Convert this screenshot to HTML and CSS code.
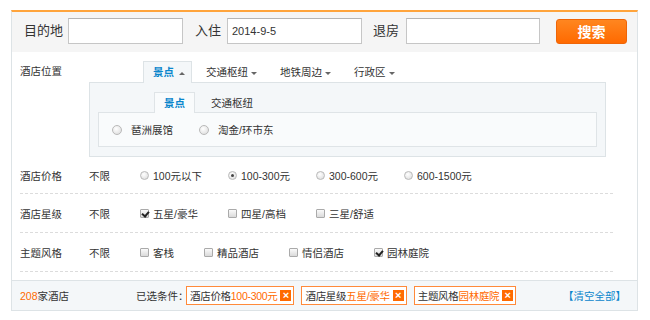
FILE: index.html
```html
<!DOCTYPE html>
<html lang="zh-CN">
<head>
  <meta charset="UTF-8">
  <meta name="viewport" content="width=device-width, initial-scale=1.0">
  <title>酒店搜索</title>
  <link rel="stylesheet" href="styles.css">
</head>
<body>
  <div class="hotel-search">
    <form class="search-bar">
      <label class="sb-label sb-label-dest" for="dest">目的地</label>
      <input id="dest" class="sb-input sb-input-dest" type="text">
      <label class="sb-label sb-label-in" for="checkin">入住</label>
      <input id="checkin" class="sb-input sb-input-in" type="text" value="2014-9-5">
      <label class="sb-label sb-label-out" for="checkout">退房</label>
      <input id="checkout" class="sb-input sb-input-out" type="text">
      <button type="button" class="sb-btn">搜索</button>
    </form>

    <div class="filters">
      <div class="loc-row">
        <span class="row-label">酒店位置</span>
        <div class="loc-body">
          <ul class="loc-tabs">
            <li class="active">景点<i class="arrow up"></i></li>
            <li>交通枢纽<i class="arrow"></i></li>
            <li>地铁周边<i class="arrow"></i></li>
            <li>行政区<i class="arrow"></i></li>
          </ul>
          <div class="loc-panel">
            <ul class="sub-tabs">
              <li class="active">景点</li>
              <li>交通枢纽</li>
            </ul>
            <div class="sub-box">
              <label class="loc-opt"><span class="radio"></span>琶洲展馆</label>
              <label class="loc-opt"><span class="radio"></span>淘金/环市东</label>
            </div>
          </div>
        </div>
      </div>

      <div class="opt-row first">
        <span class="row-label">酒店价格</span>
        <span class="any">不限</span>
        <label class="opt fixed"><span class="radio"></span>100元以下</label>
        <label class="opt fixed"><span class="radio checked"></span>100-300元</label>
        <label class="opt fixed"><span class="radio"></span>300-600元</label>
        <label class="opt fixed"><span class="radio"></span>600-1500元</label>
      </div>

      <div class="opt-row">
        <span class="row-label">酒店星级</span>
        <span class="any">不限</span>
        <label class="opt fixed"><span class="check checked"></span>五星/豪华</label>
        <label class="opt fixed"><span class="check"></span>四星/高档</label>
        <label class="opt fixed"><span class="check"></span>三星/舒适</label>
      </div>

      <div class="opt-row">
        <span class="row-label">主题风格</span>
        <span class="any">不限</span>
        <label class="opt"><span class="check"></span>客栈</label>
        <label class="opt"><span class="check"></span>精品酒店</label>
        <label class="opt"><span class="check"></span>情侣酒店</label>
        <label class="opt"><span class="check checked"></span>园林庭院</label>
      </div>
    </div>

    <div class="result-bar">
      <span class="count"><em>208</em>家酒店</span>
      <span class="chosen-label">已选条件：</span>
      <span class="tag">酒店价格<em>100-300元</em><i class="tag-close">×</i></span>
      <span class="tag">酒店星级<em>五星/豪华</em><i class="tag-close">×</i></span>
      <span class="tag">主题风格<em>园林庭院</em><i class="tag-close">×</i></span>
      <a class="clear-all" href="#">【清空全部】</a>
    </div>
  </div>
</body>
</html>
```

FILE: styles.css
```css
:root {
  --orange: #ff6a00;
  --blue: #0a86cc;
  --text: #333;
  --line: #dde3e6;
  --panel-bg: #f4f7f9;
}

* {
  margin: 0;
  padding: 0;
  box-sizing: border-box;
}

body {
  font-family: "Liberation Sans", "Noto Sans CJK SC", sans-serif;
  font-size: 10.5px;
  color: var(--text);
  background: #fff;
  padding: 10px 0 0 11px;
}

ul {
  list-style: none;
}

.hotel-search {
  width: 627px;
  border: 1px solid var(--line);
  border-top: 2px solid #ffa43c;
}

/* top search bar */
.search-bar {
  display: flex;
  align-items: center;
  height: 40px;
  padding: 0 0 2px 12px;
  background: #f5f5f5;
}

.sb-label {
  font-size: 13px;
  line-height: 26px;
}

.sb-label-dest { width: 44px; }
.sb-label-in { width: 32px; margin-left: 12px; }
.sb-label-out { width: 33px; margin-left: 11px; }

.sb-input {
  height: 26px;
  border: 1px solid #c6c6c6;
  border-top-color: #b5b5b5;
  background: #fff;
  padding: 0 4px;
  font-family: inherit;
  font-size: 11px;
  color: var(--text);
  outline: none;
}

.sb-input-dest { width: 115px; }
.sb-input-in { width: 135px; }
.sb-input-out { width: 134px; }

.sb-btn {
  width: 71px;
  height: 25px;
  margin-left: 16px;
  border: 1px solid #ef6507;
  border-radius: 3px;
  background: linear-gradient(#ff8620, #ff6a00);
  color: #fff;
  font-family: inherit;
  font-size: 14px;
  font-weight: bold;
  cursor: pointer;
}

/* filters */
.filters {
  padding: 0 24px 0 8px;
}

.row-label {
  width: 69px;
  flex-shrink: 0;
}

.loc-row {
  display: flex;
  padding-top: 9px;
}

.loc-row .row-label {
  line-height: 21px;
}

.loc-tabs {
  display: flex;
  padding-left: 54px;
}

.loc-tabs li {
  height: 21px;
  line-height: 20px;
  padding: 0 8px 0 9px;
  margin-right: 4px;
  border: 1px solid transparent;
  border-bottom: 0;
  white-space: nowrap;
}

.loc-tabs li.active {
  position: relative;
  margin-bottom: -1px;
  height: 22px;
  padding-right: 6px;
  background: var(--panel-bg);
  border-color: var(--line);
  color: var(--blue);
  font-weight: bold;
}

.arrow {
  display: inline-block;
  width: 0;
  height: 0;
  margin-left: 3px;
  vertical-align: middle;
  border-left: 3px solid transparent;
  border-right: 3px solid transparent;
  border-top: 3px solid #666;
}

.arrow.up {
  margin-left: 5px;
  border-top: 0;
  border-bottom: 3px solid #666;
}

.loc-panel {
  width: 517px;
  height: 75px;
  padding: 9px 8px 0 8px;
  background: var(--panel-bg);
  border: 1px solid var(--line);
}

.sub-tabs {
  display: flex;
  padding-left: 56px;
}

.sub-tabs li {
  height: 20px;
  line-height: 20px;
  padding: 0 9px;
  margin-right: 6px;
  border: 1px solid transparent;
  border-bottom: 0;
}

.sub-tabs li.active {
  position: relative;
  margin-bottom: -1px;
  height: 21px;
  background: #f9fbfc;
  border-color: #dfe4e7;
  color: var(--blue);
  font-weight: bold;
}

.sub-box {
  display: flex;
  align-items: center;
  gap: 26px;
  height: 35px;
  padding-left: 13px;
  background: #f9fbfc;
  border: 1px solid #dfe4e7;
}

.loc-opt {
  display: flex;
  align-items: center;
  gap: 9px;
}

.loc-opt .radio {
  width: 10px;
  height: 10px;
}

/* option rows */
.opt-row {
  display: flex;
  align-items: center;
  height: 39px;
  border-bottom: 1px dashed #dcdcdc;
}

.opt-row.first {
  height: 37px;
}

.any {
  width: 51px;
  flex-shrink: 0;
}

.opt {
  display: flex;
  align-items: center;
  gap: 4px;
  margin-right: 30px;
  white-space: nowrap;
}

.opt.fixed {
  width: 88px;
  margin-right: 0;
}

.radio {
  display: inline-block;
  width: 9px;
  height: 9px;
  border-radius: 50%;
  border: 1px solid #b9b9b9;
  background: radial-gradient(circle at 40% 35%, #fff, #d9d9d9);
  position: relative;
  flex-shrink: 0;
}

.radio.checked::after {
  content: "";
  position: absolute;
  left: 2px;
  top: 2px;
  width: 3px;
  height: 3px;
  border-radius: 50%;
  background: #444;
}

.check {
  display: inline-block;
  width: 9px;
  height: 9px;
  border: 1px solid #aaa;
  border-radius: 1px;
  background: linear-gradient(#fafafa, #dadada);
  position: relative;
  flex-shrink: 0;
}

.check.checked::after {
  content: "";
  position: absolute;
  left: 2px;
  top: 0;
  width: 3px;
  height: 5px;
  border-right: 2px solid #222;
  border-bottom: 2px solid #222;
  transform: rotate(40deg);
}

/* result bar */
.result-bar {
  display: flex;
  align-items: center;
  height: 30px;
  margin-top: 8px;
  padding: 0 11px 0 8px;
  background: var(--panel-bg);
  border-top: 1px solid var(--line);
  white-space: nowrap;
}

.result-bar em {
  font-style: normal;
  color: var(--orange);
}

.count {
  width: 116px;
  flex-shrink: 0;
}

.chosen-label {
  width: 50px;
  flex-shrink: 0;
}

.tag {
  display: flex;
  align-items: center;
  height: 19px;
  margin-right: 7px;
  padding: 0 2px 0 3px;
  background: #fff;
  border: 1px solid #ff8a3a;
  letter-spacing: -0.3px;
}

.tag-close {
  width: 11px;
  height: 11px;
  margin-left: 3px;
  background: var(--orange);
  color: #fff;
  font-style: normal;
  font-weight: bold;
  font-size: 11px;
  line-height: 10px;
  text-align: center;
  letter-spacing: 0;
}

.clear-all {
  margin-left: auto;
  color: var(--blue);
  text-decoration: none;
}
```
